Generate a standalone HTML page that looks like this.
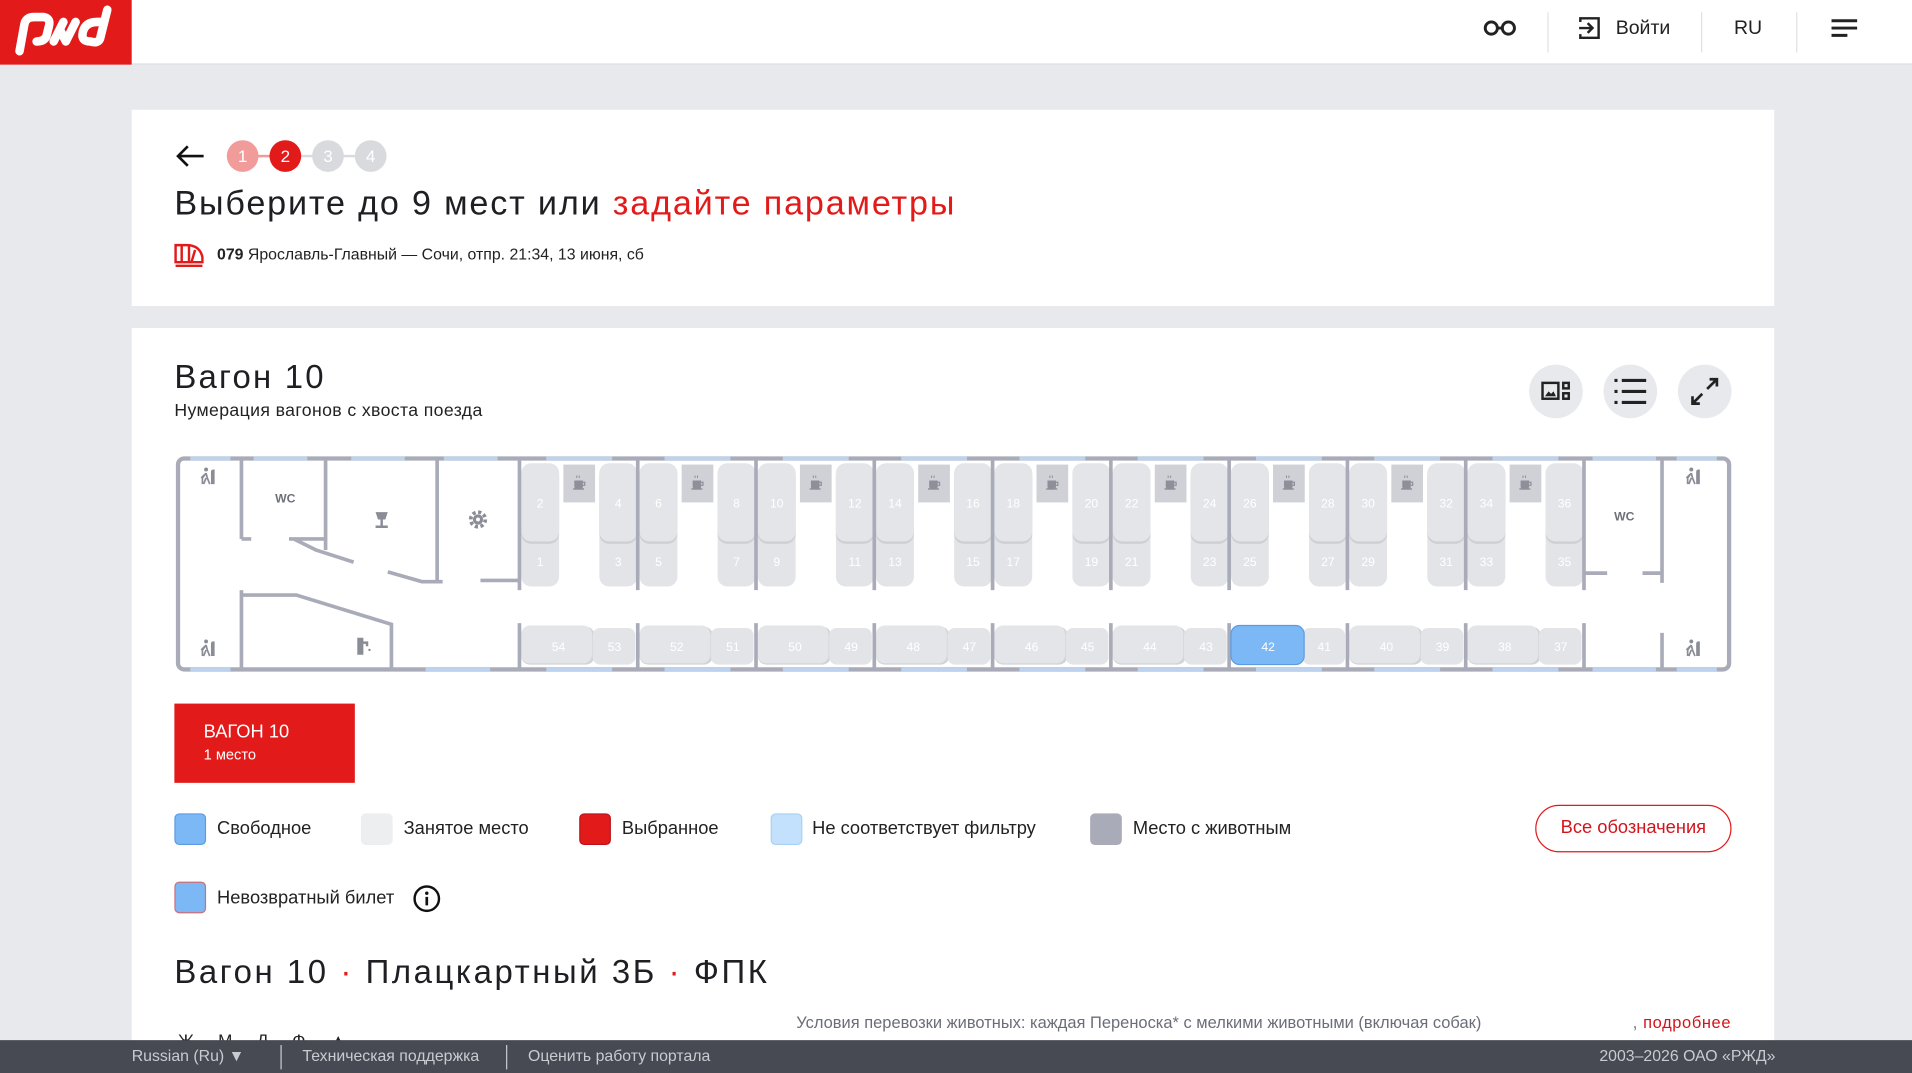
<!DOCTYPE html>
<html><head><meta charset="utf-8"><style>
*{margin:0;padding:0;box-sizing:border-box}
html,body{width:1912px;height:1072px;overflow:hidden;background:#e8e9ed}
#w{position:absolute;left:0;top:0;width:1568px;height:880px;transform:scale(1.21939);transform-origin:0 0;font-family:"Liberation Sans","DejaVu Sans",sans-serif;color:#1f1f23;background:#e8e9ed}
.a{position:absolute;white-space:nowrap}
.sw{position:absolute;width:26px;height:26px;border-radius:4px}
.lt{position:absolute;font-size:15px;line-height:18px;color:#222}
</style></head><body><div id="w">
<!-- header -->
<div class="a" style="left:0;top:0;width:1568px;height:53px;background:#fff;border-bottom:1px solid #dcdde2"></div>
<div class="a" style="left:0;top:0;width:108px;height:53px;background:#e21a1a"></div>
<svg class="a" style="left:0;top:0" width="108" height="53" viewBox="0 0 108 53">
<g fill="none" stroke="#fff" stroke-width="7" stroke-linecap="round" stroke-linejoin="round">
<path d="M16 42 L20 20 Q21 14 28 14 L36 14 Q42 15 40 22 L38 30 Q36 34 30 34"/>
<path d="M52 18 L44 34 M62 18 L54 34 L50 26"/>
<path d="M74 34 Q66 34 68 26 Q70 18 80 18 L84 18 M88 8 L82 32 Q80 36 74 34"/>
</g></svg>
<svg class="a" style="left:1215px;top:14px" width="30" height="18" viewBox="0 0 30 18"><g fill="none" stroke="#222" stroke-width="2.4"><circle cx="8" cy="9" r="5"/><circle cx="22" cy="9" r="5"/><path d="M13 9h4"/></g></svg>
<div class="a" style="left:1269px;top:10px;width:1px;height:33px;background:#e0e1e5"></div>
<svg class="a" style="left:1293px;top:12px" width="22" height="22" viewBox="0 0 22 22"><g fill="none" stroke="#222" stroke-width="2"><path d="M3 6V3h15v16H3v-3"/><path d="M2 11h11M9 7l4 4-4 4"/></g></svg>
<div class="a" style="left:1325px;top:14px;font-size:16px;line-height:20px;color:#222">Войти</div>
<div class="a" style="left:1395px;top:10px;width:1px;height:33px;background:#e0e1e5"></div>
<div class="a" style="left:1422px;top:14px;font-size:16px;line-height:20px;color:#222">RU</div>
<div class="a" style="left:1473px;top:10px;width:1px;height:33px;background:#e0e1e5"></div>
<svg class="a" style="left:1500px;top:14px" width="24" height="18" viewBox="0 0 24 18"><g stroke="#222" stroke-width="2.4"><path d="M2 3h21M2 9h21M2 15h13"/></g></svg>

<!-- card 1 -->
<div class="a" style="left:108px;top:90px;width:1347px;height:161px;background:#fff"></div>
<svg class="a" style="left:143px;top:118px" width="26" height="20" viewBox="0 0 26 20"><g fill="none" stroke="#111" stroke-width="2.2"><path d="M24 10H3M11 2L3 10l8 8"/></g></svg>
<div class="a" style="left:199px;top:127px;width:105px;height:2px;background:#d9dadd"></div>
<div class="a" style="left:199px;top:127px;width:35px;height:2px;background:#f09a9a"></div>
<div class="a" style="left:186px;top:115px;width:26px;height:26px;border-radius:50%;background:#f19b9b;color:#fff;font-size:14px;line-height:26px;text-align:center">1</div>
<div class="a" style="left:221px;top:115px;width:26px;height:26px;border-radius:50%;background:#e21a1a;color:#fff;font-size:14px;line-height:26px;text-align:center">2</div>
<div class="a" style="left:256px;top:115px;width:26px;height:26px;border-radius:50%;background:#d9dadd;color:#fff;font-size:14px;line-height:26px;text-align:center">3</div>
<div class="a" style="left:291px;top:115px;width:26px;height:26px;border-radius:50%;background:#d9dadd;color:#fff;font-size:14px;line-height:26px;text-align:center">4</div>
<div class="a" style="left:143px;top:150px;font-size:28px;line-height:34px;letter-spacing:1.5px;color:#1f1f23">Выберите до 9 мест или <span style="color:#e21a1a">задайте параметры</span></div>
<svg class="a" style="left:142px;top:198px" width="26" height="22" viewBox="0 0 26 22"><g fill="none" stroke="#e21a1a" stroke-width="2"><path d="M2 17V3h9q11 0 13 10v4z"/><path d="M7 3v14M13 4v13M18 7l-3 10"/><path d="M2 20h22"/></g></svg>
<div class="a" style="left:178px;top:200px;font-size:13px;line-height:17px;color:#222"><b>079</b> Ярославль-Главный — Сочи, отпр. 21:34, 13 июня, сб</div>

<!-- card 2 -->
<div class="a" style="left:108px;top:269px;width:1347px;height:600px;background:#fff"></div>
<div class="a" style="left:143px;top:293px;font-size:27px;line-height:32px;letter-spacing:1.8px;color:#1f1f23">Вагон 10</div>
<div class="a" style="left:143px;top:328px;font-size:14.5px;line-height:18px;color:#222;letter-spacing:0.3px">Нумерация вагонов с хвоста поезда</div>
<div class="a" style="left:1254px;top:299px;width:44px;height:44px;border-radius:50%;background:#e8e9ed"></div>
<div class="a" style="left:1315px;top:299px;width:44px;height:44px;border-radius:50%;background:#e8e9ed"></div>
<div class="a" style="left:1376px;top:299px;width:44px;height:44px;border-radius:50%;background:#e8e9ed"></div>
<svg class="a" style="left:1254px;top:299px" width="44" height="44" viewBox="0 0 44 44"><g fill="none" stroke="#222" stroke-width="2"><rect x="11" y="15" width="13" height="13"/><rect x="28" y="15" width="4.5" height="4.5"/><rect x="28" y="23.5" width="4.5" height="4.5"/></g><path d="M13 26l3-4 2 2 2-2 2 4z" fill="#222"/></svg>
<svg class="a" style="left:1315px;top:299px" width="44" height="44" viewBox="0 0 44 44"><g stroke="#222" stroke-width="2.6"><path d="M9 13h2.5M9 22h2.5M9 31h2.5M15 13h20M15 22h20M15 31h20"/></g></svg>
<svg class="a" style="left:1376px;top:299px" width="44" height="44" viewBox="0 0 44 44"><g fill="none" stroke="#222" stroke-width="2.2"><path d="M24 20l8-8M26 12h6v6M20 24l-8 8M12 26v6h6"/></g></svg>

<!-- scheme -->
<svg class="a" style="left:0;top:0" width="1568" height="600" viewBox="0 0 1568 600">
<defs>
<g id="cup"><path d="M-4 -3h7v5q0 2-2 2h-3q-2 0-2-2z" fill="#8d9098"/><path d="M3 -1.5h1.5v2.5H3" fill="none" stroke="#8d9098" stroke-width="1"/><path d="M-5 4h9" stroke="#8d9098" stroke-width="1.2"/><path d="M-2 -7v2M0 -7v2" stroke="#8d9098" stroke-width="0.8"/></g>
<g id="seat"><rect x="0" y="380" width="31" height="101" rx="8" fill="#e3e4e7"/><rect x="0" y="382" width="31" height="64" rx="8" fill="#cfd0d4"/><rect x="0" y="380" width="31" height="64" rx="8" fill="#e4e5e8"/></g>
<g id="door"><circle cx="-3" cy="-7" r="1.6" fill="#8a8d96"/><path d="M-3-4l-3 4v5M-3-4l1 4 2 5M-3 0l-2 5M-4-3l-3 3" fill="none" stroke="#8a8d96" stroke-width="1.4"/><path d="M3-7q-2 0-2 2v10h3v-12z" fill="#8a8d96"/></g>
<g id="comp">
<use href="#seat" x="1.5"/>
<rect x="36" y="381" width="26" height="31" fill="#cfd1d6"/>
<use href="#cup" x="49" y="397"/>
<use href="#seat" x="65.5"/>
<rect x="1.5" y="514" width="60" height="31" rx="7" fill="#d2d3d7"/>
<rect x="60" y="515" width="35" height="30" rx="6" fill="#e3e4e7"/>
<rect x="1.5" y="513" width="58" height="31" rx="7" fill="#e4e5e8"/>
<path d="M0 375V484M0 511V550" stroke="#a9acb8" stroke-width="3"/>
<path d="M22 376h54M22 549h54" stroke="#bcd2ee" stroke-width="3"/>
</g>
</defs>
<rect x="146" y="376" width="1272" height="173" rx="5" fill="#fff" stroke="#a9acb8" stroke-width="3.5"/>
<g stroke="#bcd2ee" stroke-width="3"><path d="M156 376h33M208 376h44M288 376h44M364 376h44M1306 376h52M1375 376h33M156 549h33M349 549h53M1306 549h52M1375 549h33"/></g>
<g stroke="#a9acb8" stroke-width="3" fill="none">
<path d="M198 375V442M198 442h8M237 442h30M267 375V451M241 442l18 9 31 10M318 469l28 8h17M358.5 375V477M394 476h32"/>
<path d="M198 550V484M198 488h45l78 24v38"/>
<path d="M1363 375V478M1299 470h19M1347 470h16M1363 550V519"/>
</g>
<text x="234" y="412" font-size="10" font-weight="bold" fill="#6d7079" text-anchor="middle" font-family="Liberation Sans">WC</text>
<text x="1332" y="427" font-size="10" font-weight="bold" fill="#6d7079" text-anchor="middle" font-family="Liberation Sans">WC</text>
<g fill="#8a8d96"><path d="M308 420h10l-2 6h-2v5h4v2h-10v-2h4v-5h-2z"/>
<circle cx="392" cy="426" r="6" fill="none" stroke="#8a8d96" stroke-width="3" stroke-dasharray="2.6 2.1"/><circle cx="392" cy="426" r="4.2"/><circle cx="392" cy="426" r="1.6" fill="#fff"/>
<path d="M293 523h5v3h4v4h-2v-2h-2v9h-5z"/><circle cx="303" cy="533" r="1"/></g>
<use href="#door" x="172" y="392"/><use href="#door" x="172" y="533"/>
<use href="#door" x="1390" y="392"/><use href="#door" x="1390" y="533"/>
<use href="#comp" x="426"/><use href="#comp" x="523"/><use href="#comp" x="620"/><use href="#comp" x="717"/><use href="#comp" x="814"/><use href="#comp" x="911"/><use href="#comp" x="1008"/><use href="#comp" x="1105"/><use href="#comp" x="1202"/>
<rect x="1009.5" y="513" width="60" height="32" rx="7" fill="#7cb8f6" stroke="#5a9be3" stroke-width="1"/>
<path d="M1299 375V484M1299 511V550" stroke="#a9acb8" stroke-width="3"/>
<g font-family="Liberation Sans" font-size="10" fill="#fff" text-anchor="middle">
<text x="443" y="416">2</text><text x="443" y="464">1</text><text x="507" y="416">4</text><text x="507" y="464">3</text><text x="458" y="534">54</text><text x="504" y="534">53</text>
<text x="540" y="416">6</text><text x="540" y="464">5</text><text x="604" y="416">8</text><text x="604" y="464">7</text><text x="555" y="534">52</text><text x="601" y="534">51</text>
<text x="637" y="416">10</text><text x="637" y="464">9</text><text x="701" y="416">12</text><text x="701" y="464">11</text><text x="652" y="534">50</text><text x="698" y="534">49</text>
<text x="734" y="416">14</text><text x="734" y="464">13</text><text x="798" y="416">16</text><text x="798" y="464">15</text><text x="749" y="534">48</text><text x="795" y="534">47</text>
<text x="831" y="416">18</text><text x="831" y="464">17</text><text x="895" y="416">20</text><text x="895" y="464">19</text><text x="846" y="534">46</text><text x="892" y="534">45</text>
<text x="928" y="416">22</text><text x="928" y="464">21</text><text x="992" y="416">24</text><text x="992" y="464">23</text><text x="943" y="534">44</text><text x="989" y="534">43</text>
<text x="1025" y="416">26</text><text x="1025" y="464">25</text><text x="1089" y="416">28</text><text x="1089" y="464">27</text><text x="1040" y="534">42</text><text x="1086" y="534">41</text>
<text x="1122" y="416">30</text><text x="1122" y="464">29</text><text x="1186" y="416">32</text><text x="1186" y="464">31</text><text x="1137" y="534">40</text><text x="1183" y="534">39</text>
<text x="1219" y="416">34</text><text x="1219" y="464">33</text><text x="1283" y="416">36</text><text x="1283" y="464">35</text><text x="1234" y="534">38</text><text x="1280" y="534">37</text>
</g>
</svg>

<!-- wagon tab -->
<div class="a" style="left:143px;top:577px;width:148px;height:65px;background:#e21a1a"></div>
<div class="a" style="left:167px;top:592px;font-size:15px;line-height:18px;color:#fff">ВАГОН 10</div>
<div class="a" style="left:167px;top:612px;font-size:12px;line-height:14px;color:#fff">1 место</div>

<!-- legend -->
<div class="sw" style="left:143px;top:667px;background:#7cb8f6;border:1px solid #5a9be3"></div><div class="lt" style="left:178px;top:671px">Свободное</div>
<div class="sw" style="left:296px;top:667px;background:#eceef0"></div><div class="lt" style="left:331px;top:671px">Занятое место</div>
<div class="sw" style="left:475px;top:667px;background:#e21a1a;border:1px solid #b8141c"></div><div class="lt" style="left:510px;top:671px">Выбранное</div>
<div class="sw" style="left:632px;top:667px;background:#c3e1fc;border:1px solid #a9d0f5"></div><div class="lt" style="left:666px;top:671px">Не соответствует фильтру</div>
<div class="sw" style="left:894px;top:667px;background:#a9acb8"></div><div class="lt" style="left:929px;top:671px">Место с животным</div>
<div class="a" style="left:1259px;top:660px;width:161px;height:39px;border:1.5px solid #e21a1a;border-radius:20px;color:#d3141c;font-size:15px;line-height:36px;text-align:center">Все обозначения</div>
<div class="sw" style="left:143px;top:723px;background:#7cb8f6;border:1px solid #c9707a"></div><div class="lt" style="left:178px;top:728px">Невозвратный билет</div>
<svg class="a" style="left:338px;top:725px" width="24" height="24" viewBox="0 0 24 24"><circle cx="12" cy="12" r="10" fill="none" stroke="#111" stroke-width="2"/><circle cx="12" cy="7.5" r="1.4" fill="#111"/><path d="M12 10.5v7" stroke="#111" stroke-width="2.2"/></svg>

<div class="a" style="left:143px;top:780px;font-size:27px;line-height:34px;letter-spacing:2.1px;color:#1f1f23">Вагон 10 <span style="color:#e21a1a">·</span> Плацкартный 3Б <span style="color:#e21a1a">·</span> ФПК</div>
<div class="a" style="left:653px;top:830px;font-size:13.5px;line-height:17px;color:#6b6e78">Условия перевозки животных: каждая Переноска* с мелкими животными (включая собак)</div>
<div class="a" style="left:1339px;top:830px;font-size:13.5px;line-height:17px;color:#6b6e78;letter-spacing:0.5px">, <span style="color:#d3141c">подробнее</span></div>
<div class="a" style="left:146px;top:845px;font-size:14px;line-height:17px;color:#222;letter-spacing:20px">ЖМДФ▲</div>

<!-- footer -->
<div class="a" style="left:0;top:853px;width:1568px;height:27px;background:#474a53"></div>
<div class="a" style="left:108px;top:858px;font-size:13px;line-height:16px;color:#c9cbd1">Russian (Ru) ▼</div>
<div class="a" style="left:230px;top:857px;width:1px;height:20px;background:#c9cbd1"></div>
<div class="a" style="left:248px;top:858px;font-size:13px;line-height:16px;color:#c9cbd1">Техническая поддержка</div>
<div class="a" style="left:415px;top:857px;width:1px;height:20px;background:#c9cbd1"></div>
<div class="a" style="left:433px;top:858px;font-size:13px;line-height:16px;color:#c9cbd1">Оценить работу портала</div>
<div class="a" style="left:1300px;top:858px;width:156px;text-align:right;font-size:13px;line-height:16px;color:#c9cbd1">2003–2026 ОАО «РЖД»</div>
</div></body></html>
